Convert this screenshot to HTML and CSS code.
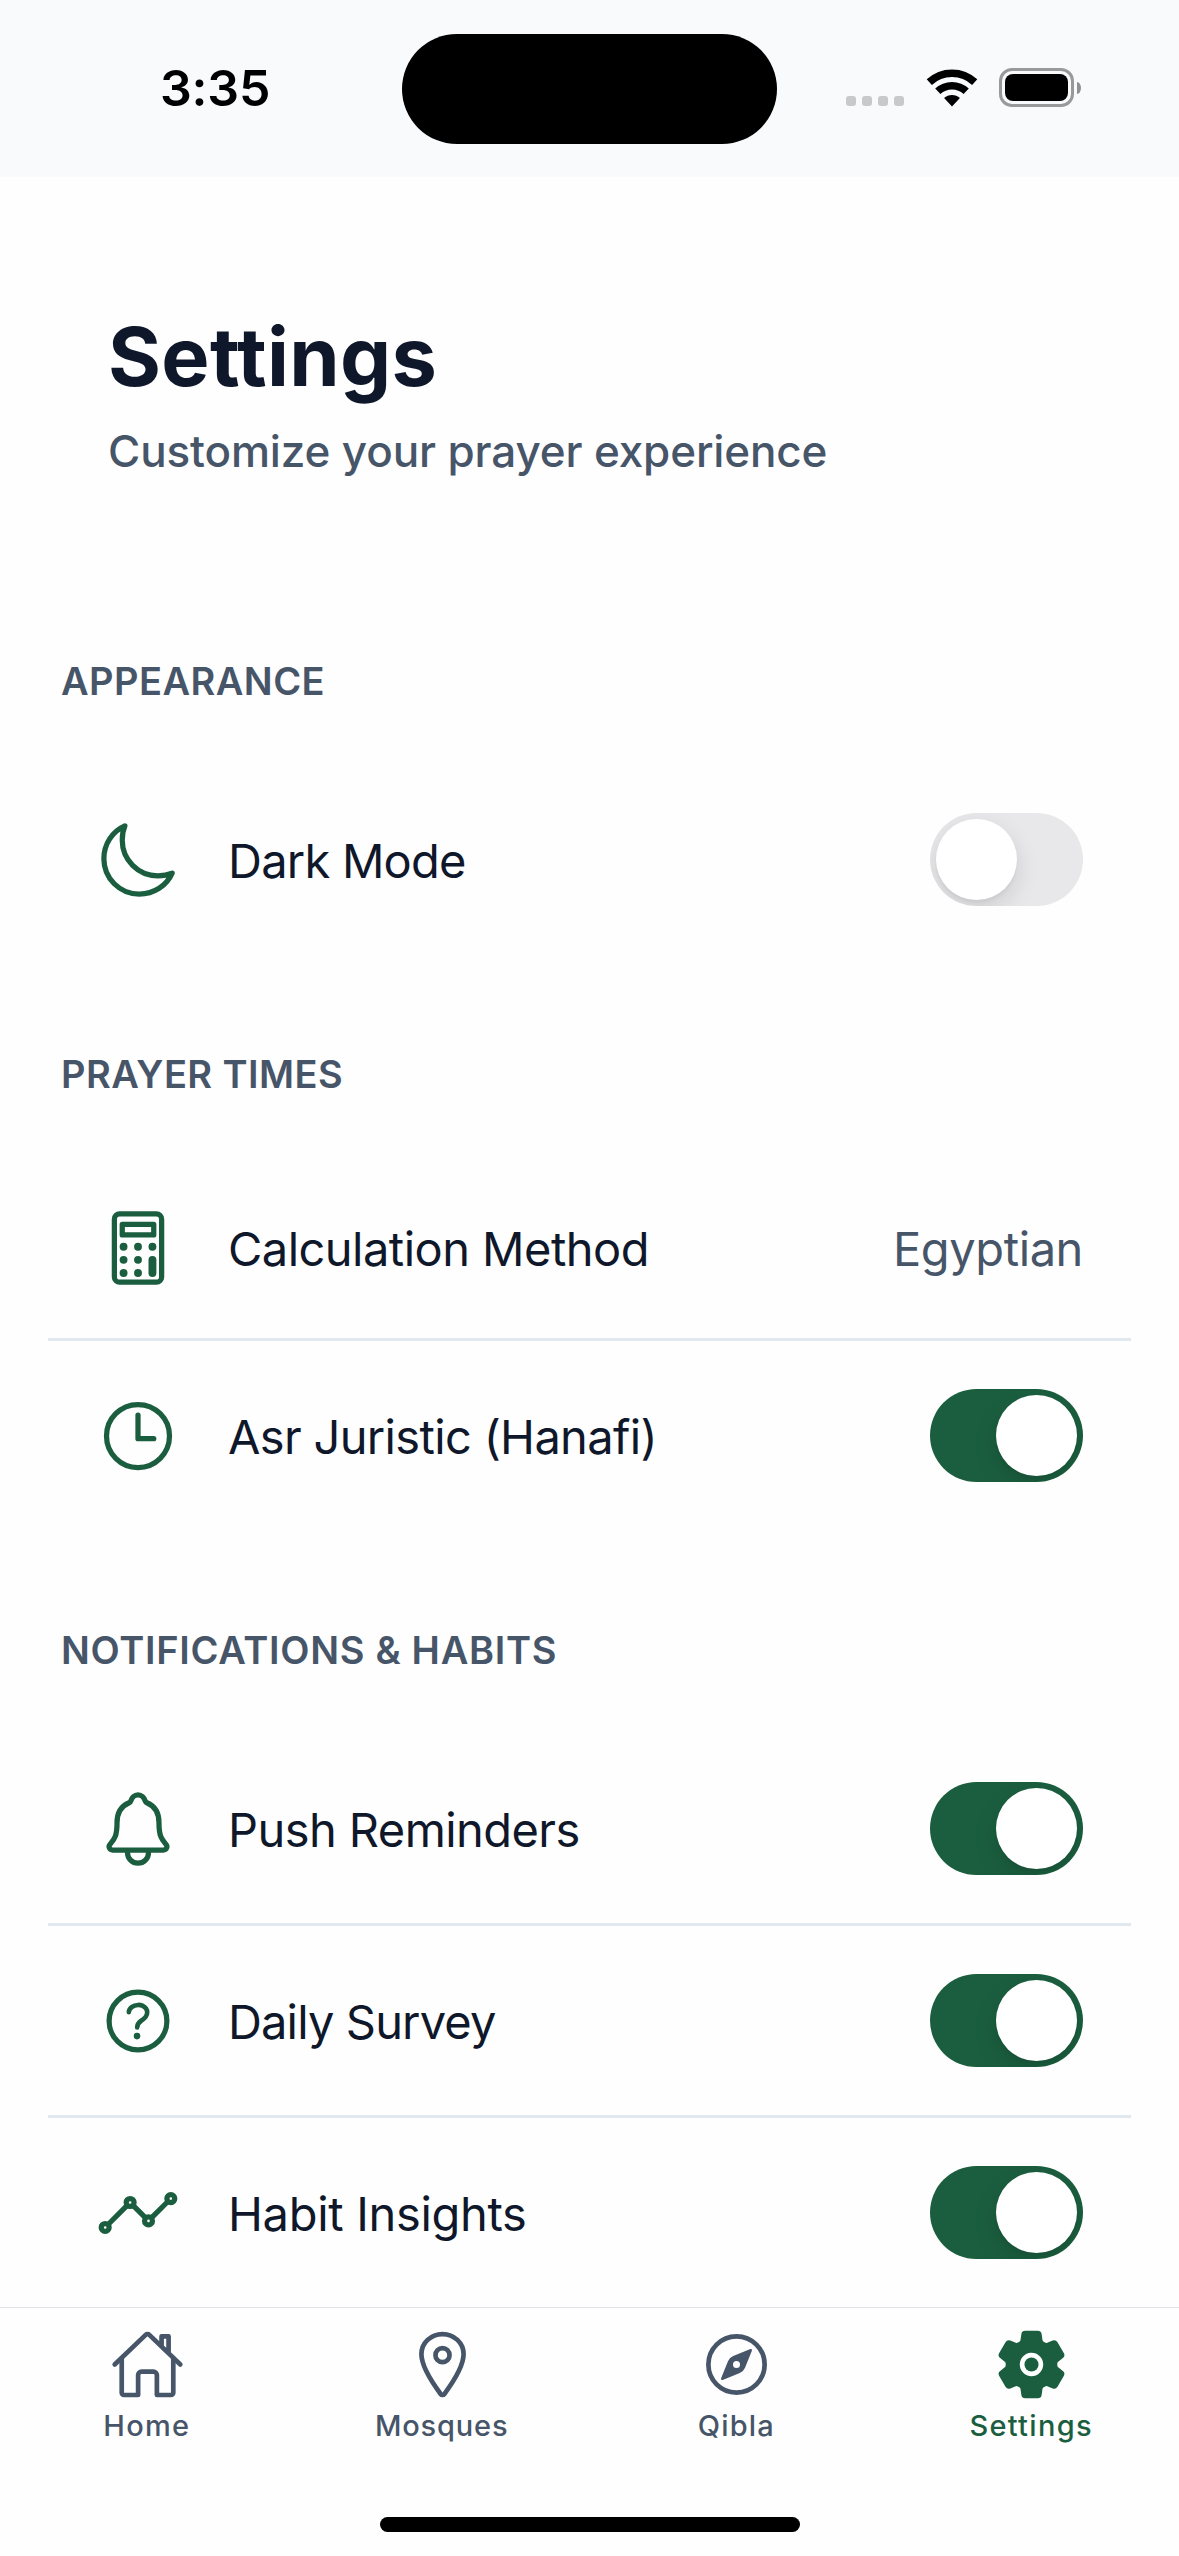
FILE: index.html
```html
<!DOCTYPE html>
<html lang="en">
<head>
<meta charset="utf-8">
<title>Settings</title>
<link rel="stylesheet" href="styles.css">
</head>
<body>
<div class="status-bar">
  <div class="status-time">3:35</div>
  <div class="island"></div>
  <div class="status-icons">
    <div class="signal"><i></i><i></i><i></i><i></i></div>
    <svg class="wifi" viewBox="0 0 52 38">
      <path d="M3.3 13.15A33.3 33.3 0 0 1 48.7 13.15M11.8 22.3A20.8 20.8 0 0 1 40.2 22.3" fill="none" stroke="#000" stroke-width="7.6"/>
      <path d="M26 37.5L18.1 29.1A11.5 11.5 0 0 1 33.9 29.1Z"/>
    </svg>
    <div class="battery"><div class="battery-fill"></div></div>
    <div class="battery-cap"></div>
  </div>
</div>

<main class="content">
  <header class="header">
    <h1 class="title">Settings</h1>
    <p class="subtitle">Customize your prayer experience</p>
  </header>

  <section class="section">
    <h2 class="section-title">APPEARANCE</h2>
    <div class="row">
      <svg class="icon" viewBox="0 0 512 512"><path d="M160 136c0-30.62 4.51-61.61 16-88C99.57 81.27 48 159.32 48 248c0 119.29 96.71 216 216 216 88.68 0 166.73-51.57 200-128-26.39 11.49-57.38 16-88 16-119.29 0-216-96.71-216-216z"/></svg>
      <span class="label label-dark">Dark Mode</span>
      <div class="toggle"><div class="knob"></div></div>
    </div>
  </section>

  <section class="section">
    <h2 class="section-title">PRAYER TIMES</h2>
    <div class="row row-value">
      <svg class="icon" viewBox="0 0 512 512">
        <rect x="112" y="48" width="288" height="416" rx="32"/>
        <rect x="160" y="112" width="192" height="64"/>
        <g class="solid"><circle cx="168" cy="248" r="24"/><circle cx="256" cy="248" r="24"/><circle cx="344" cy="248" r="24"/><circle cx="168" cy="328" r="24"/><circle cx="256" cy="328" r="24"/><circle cx="168" cy="408" r="24"/><circle cx="256" cy="408" r="24"/><rect x="320" y="304" width="48" height="128" rx="24"/></g>
      </svg>
      <span class="label label-method">Calculation Method</span>
      <span class="value">Egyptian</span>
    </div>
    <div class="row">
      <svg class="icon" viewBox="0 0 512 512"><circle cx="256" cy="256" r="192"/><path d="M256 128v144h96"/></svg>
      <span class="label label-asr">Asr Juristic (Hanafi)</span>
      <div class="toggle toggle-on"><div class="knob"></div></div>
    </div>
  </section>

  <section class="section">
    <h2 class="section-title section-title-wide">NOTIFICATIONS &amp; HABITS</h2>
    <div class="row">
      <svg class="icon" viewBox="0 0 512 512"><path d="M427.68 351.43C402 320 383.87 304 383.87 217.35 383.87 138 343.35 109.73 310 96c-4.43-1.82-8.6-6-9.95-10.55C294.2 65.54 277.8 48 256 48s-38.21 17.55-44 37.47c-1.35 4.6-5.52 8.71-9.95 10.53-33.39 13.75-73.87 41.92-73.87 121.35C128.18 304 110 320 84.32 351.43 73.68 364.45 83 384 101.61 384h308.88c18.51 0 27.77-19.61 17.19-32.57zM320 384v16a64 64 0 01-128 0v-16"/></svg>
      <span class="label label-push">Push Reminders</span>
      <div class="toggle toggle-on"><div class="knob"></div></div>
    </div>
    <div class="row">
      <svg class="icon" viewBox="0 0 512 512"><circle cx="256" cy="256" r="176"/><path stroke-width="28" d="M200 202.29s.84-17.5 19.57-32.57C230.68 160.77 244 158.18 256 158c10.93-.14 20.69 1.67 26.53 4.45 10 4.76 29.47 16.38 29.47 41.09 0 26-17 37.81-36.37 50.8S251 281.43 251 296"/><circle class="solid" cx="250" cy="348" r="20"/></svg>
      <span class="label label-survey">Daily Survey</span>
      <div class="toggle toggle-on"><div class="knob"></div></div>
    </div>
    <div class="row">
      <svg class="icon" viewBox="0 0 512 512"><path d="M344 280l88-88M232 216l64 64M80 320l104-104"/><circle cx="456" cy="168" r="24"/><circle cx="320" cy="304" r="24"/><circle cx="208" cy="192" r="24"/><circle cx="56" cy="344" r="24"/></svg>
      <span class="label label-habit">Habit Insights</span>
      <div class="toggle toggle-on"><div class="knob"></div></div>
    </div>
  </section>
</main>

<footer class="footer">
  <nav class="tabs">
    <div class="tab tab-home">
      <svg class="tab-icon" viewBox="0 0 512 512"><path d="M80 212v236a16 16 0 0016 16h96V328a24 24 0 0124-24h80a24 24 0 0124 24v136h96a16 16 0 0016-16V212"/><path d="M480 256L266.89 52c-5-5.28-16.69-5.34-21.78 0L32 256M400 179V64h-48v69"/></svg>
      <span>Home</span>
    </div>
    <div class="tab tab-mosques">
      <svg class="tab-icon" viewBox="0 0 512 512"><path d="M256 48c-79.5 0-144 61.39-144 137 0 87 96 224.87 131.25 272.49a15.77 15.77 0 0025.5 0C304 409.89 400 272.07 400 185c0-75.61-64.5-137-144-137z"/><circle cx="256" cy="192" r="48"/></svg>
      <span>Mosques</span>
    </div>
    <div class="tab tab-qibla">
      <svg class="tab-icon" viewBox="0 0 512 512"><circle cx="256" cy="256" r="192"/><path class="solid" d="M350.67 150.93l-117.2 46.88a64 64 0 00-35.66 35.66l-46.88 117.2a8 8 0 0010.4 10.4l117.2-46.88a64 64 0 0035.66-35.66l46.88-117.2a8 8 0 00-10.4-10.4zM256 280a24 24 0 1124-24 24 24 0 01-24 24z"/></svg>
      <span>Qibla</span>
    </div>
    <div class="tab tab-settings">
      <svg class="tab-icon" viewBox="0 0 512 512"><g class="solid"><circle cx="256" cy="256" r="48"/><path d="M470.39 300l-.47-.38-31.56-24.75a16.11 16.11 0 01-6.1-13.33v-11.56a16 16 0 016.11-13.22L469.92 212l.47-.38a26.68 26.68 0 005.9-34.06l-42.71-73.9a1.59 1.59 0 01-.13-.22A26.86 26.86 0 00401 92.14l-.35.13-37.1 14.93a15.94 15.94 0 01-14.47-1.29q-4.92-3.1-10-5.86a15.94 15.94 0 01-8.19-11.82l-5.59-39.59-.12-.72A27.22 27.22 0 00298.76 26h-85.52a26.92 26.92 0 00-26.45 22.39l-.09.56-5.57 39.67a16 16 0 01-8.13 11.82 175.21 175.21 0 00-10 5.82 15.92 15.92 0 01-14.43 1.27l-37.13-15-.35-.14a26.87 26.87 0 00-32.48 11.34l-.13.22-42.77 73.95a26.71 26.71 0 005.9 34.1l.47.38 31.56 24.75a16.11 16.11 0 016.1 13.33v11.56a16 16 0 01-6.11 13.22L42.08 300l-.47.38a26.68 26.68 0 00-5.9 34.06l42.71 73.9a1.59 1.59 0 01.13.22A26.86 26.86 0 00111 419.86l.35-.13 37.07-14.93a15.94 15.94 0 0114.47 1.29q4.92 3.11 10 5.86a15.94 15.94 0 018.19 11.82l5.56 39.59.12.72A27.22 27.22 0 00213.24 486h85.52a26.92 26.92 0 0026.45-22.39l.09-.56 5.57-39.67a16 16 0 018.18-11.82c3.42-1.84 6.76-3.79 10-5.82a15.92 15.92 0 0114.43-1.27l37.13 14.95.35.14a26.85 26.85 0 0032.48-11.34 2.53 2.53 0 01.13-.22l42.71-73.89a26.7 26.7 0 00-5.89-34.11zm-134.48-40.24a80 80 0 11-83.66-83.67 80.21 80.21 0 0183.66 83.67z"/></g></svg>
      <span>Settings</span>
    </div>
  </nav>
  <div class="home-indicator"></div>
</footer>
</body>
</html>
```
FILE: styles.css
```css
* { box-sizing: border-box; margin: 0; padding: 0; }

body {
  width: 1179px;
  height: 2556px;
  display: flex;
  flex-direction: column;
  overflow: hidden;
  background: #fefefe;
  color: #0f172a;
  font-family: Inter, "Liberation Sans", sans-serif;
}

/* Status bar */
.status-bar {
  flex: none;
  height: 177px;
  display: grid;
  grid-template-columns: 402px 375px 402px;
  align-items: start;
  background: #f9fafc;
}
.status-time {
  padding: 57px 0 0 160px;
  font-size: 50px;
  line-height: 62px;
  font-weight: 600;
  letter-spacing: -0.2px;
  color: #000;
}
.island { height: 110px; margin-top: 34px; border-radius: 55px; background: #000; }
.status-icons { display: flex; align-items: center; height: 39px; margin-top: 68px; padding-left: 69px; }
.signal { display: flex; gap: 6px; align-self: flex-end; padding-bottom: 1px; }
.signal i { width: 10px; height: 10px; border-radius: 3px; background: #c8c9cb; }
.wifi { width: 52px; height: 38px; margin: 0 21px 0 22px; }
.battery { width: 75px; height: 39px; padding: 3px; border: 3px solid #98999b; border-radius: 13px; }
.battery-fill { height: 27px; border-radius: 8px; background: #000; }
.battery-cap { width: 4px; height: 12px; margin-left: 3px; border-radius: 0 4px 4px 0 / 0 6px 6px 0; background: #909193; }

/* Scrolling content */
.content { flex: none; height: 2130px; padding: 130px 48px 0; overflow: hidden; }
.header { padding-left: 60px; margin-bottom: 80px; }
.title { font-size: 81px; line-height: 100px; font-weight: 700; letter-spacing: 0.3px; }
.subtitle { margin-top: 14px; font-size: 44px; line-height: 60px; font-weight: 500; letter-spacing: -0.13px; color: #475569; }

.section { padding-top: 97px; }
.section-title {
  padding-left: 13px;
  margin-bottom: 61px;
  font-size: 38px;
  line-height: 46px;
  font-weight: 600;
  letter-spacing: 0.44px;
  color: #475569;
}
.section-title-wide { letter-spacing: 0.7px; }

.row { height: 189px; display: flex; align-items: center; padding: 0 48px; }
.row-value { height: 180px; }
.row + .row { border-top: 3px solid #e2e8f0; height: 192px; }

.icon { flex: none; width: 84px; height: 84px; margin-right: 48px; color: #1b5e3f; }
.icon, .tab-icon {
  fill: none;
  stroke: currentColor;
  stroke-width: 32px;
  stroke-linecap: round;
  stroke-linejoin: round;
}
.solid { fill: currentColor; stroke: none; }

.label, .value { padding-top: 2px; font-size: 47px; line-height: 60px; white-space: nowrap; }
.label { flex: 1; }
.value { color: #475569; letter-spacing: -0.4px; }
.label-dark { letter-spacing: -0.77px; }
.label-method { letter-spacing: -0.53px; }
.label-asr { letter-spacing: -0.66px; }
.label-push { letter-spacing: -0.56px; }
.label-survey { letter-spacing: -0.85px; }
.label-habit { letter-spacing: -0.32px; }

.toggle {
  flex: none;
  display: flex;
  width: 153px;
  height: 93px;
  padding: 6px;
  border-radius: 47px;
  background: #e8e8ea;
  overflow: hidden;
}
.toggle-on { justify-content: flex-end; background: #1b5e3f; }
.knob { width: 81px; height: 81px; border-radius: 50%; background: #fff; box-shadow: 0 9px 24px rgba(0, 0, 0, 0.12), 0 3px 3px rgba(0, 0, 0, 0.04); }

/* Bottom navigation */
.footer { flex: none; height: 249px; border-top: 1px solid #e0e4e9; padding-top: 19px; background: #fefefe; }
.tabs { display: grid; grid-template-columns: repeat(4, 1fr); height: 190px; }
.tab {
  display: flex;
  flex-direction: column;
  align-items: center;
  font-size: 29px;
  line-height: 36px;
  font-weight: 500;
  color: #475569;
}
.tab span { padding-right: 1px; }
.tab-icon { width: 75px; height: 75px; margin-bottom: 6px; }
.tab-home { letter-spacing: 1.3px; }
.tab-mosques { letter-spacing: 0.83px; }
.tab-qibla { letter-spacing: 1.17px; }
.tab-settings { letter-spacing: 1.3px; color: #1b5e3f; }
.home-indicator { width: 420px; height: 15px; margin: 0 auto; border-radius: 8px; background: #000; }
```
